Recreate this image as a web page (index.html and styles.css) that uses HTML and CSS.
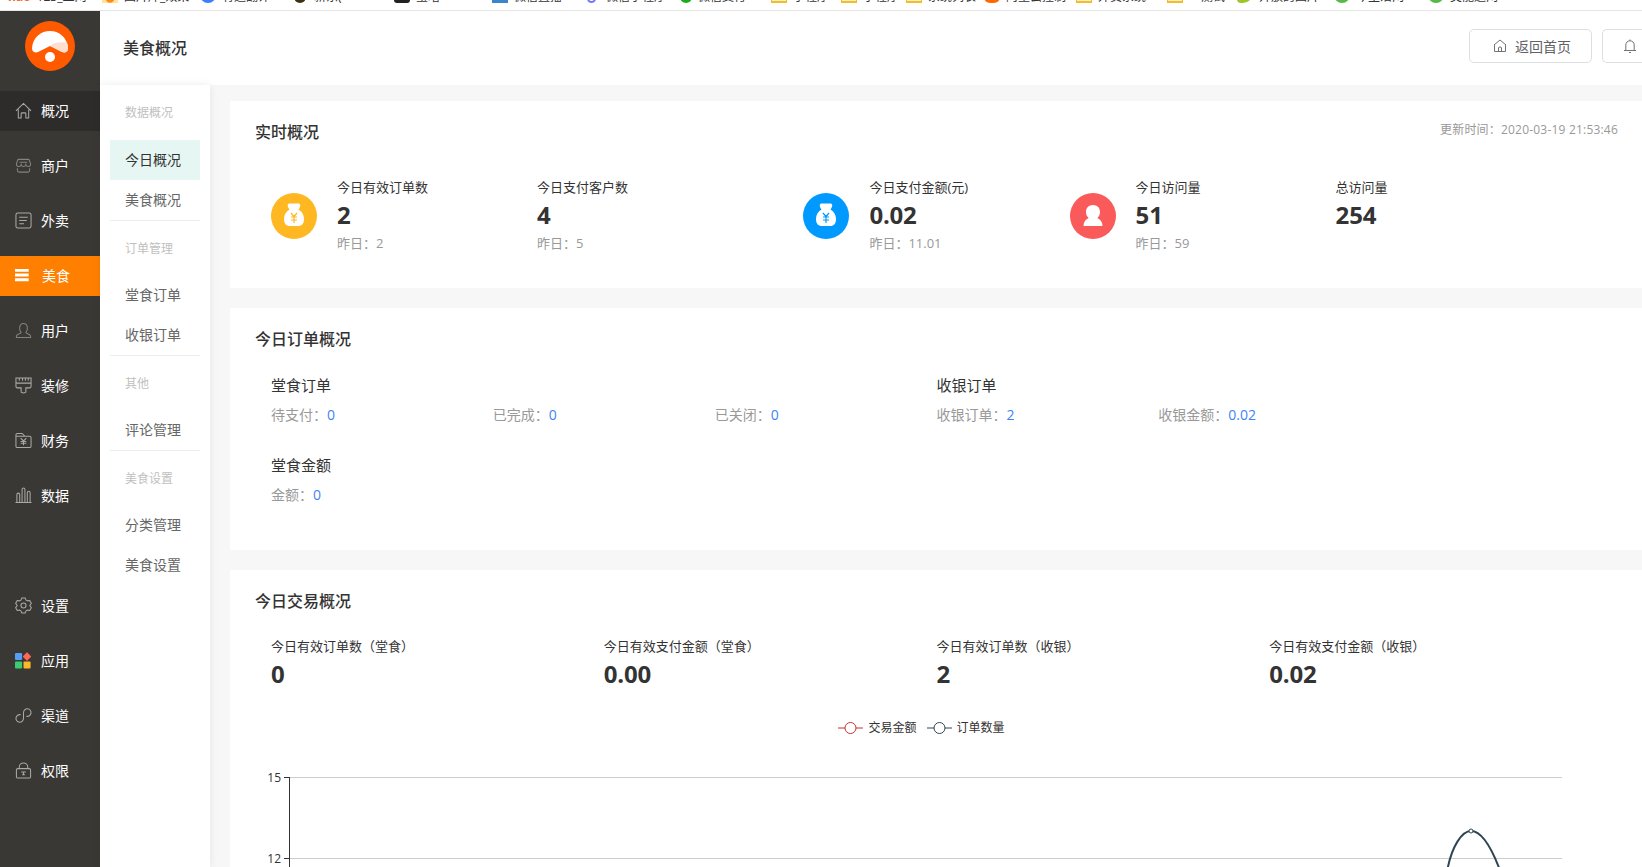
FILE: index.html
```
<!DOCTYPE html>
<html lang="zh-CN">
<head>
  <meta charset="UTF-8">
  <title>美食概况</title>
  <link rel="stylesheet" href="styles.css">
</head>
<body>

  <ul class="bookmarks">
    <li><b class="hao">hao</b><span>123_上网</span></li>
    <li><i class="mark sun"></i><span>图片库_效果</span></li>
    <li><i class="mark blue"></i><span>有道翻译</span></li>
    <li><i class="mark bag"></i><span>新东(</span></li>
    <li><i class="mark black"></i><span>宝塔</span></li>
    <li><i class="mark square"></i><span>微信直播</span></li>
    <li><i class="mark purple"></i><span>微信小程序</span></li>
    <li><i class="mark chat"></i><span>微信支付</span></li>
    <li><i class="mark folder"></i><span>小程序</span></li>
    <li><i class="mark folder"></i><span>小程序</span></li>
    <li><i class="mark folder"></i><span>系统列表</span></li>
    <li><i class="mark orange"></i><span>阿里云控制</span></li>
    <li><i class="mark folder"></i><span>外卖系统</span></li>
    <li><i class="mark folder"></i><span>　测试</span></li>
    <li><i class="mark leaf"></i><span>开放的图片</span></li>
    <li><i class="mark green"></i><span>今生活网</span></li>
    <li><i class="mark green"></i><span>美能达网</span></li>
  </ul>

  <div class="app">
    <nav class="sidebar">
      <svg class="logo" viewBox="0 0 50 50">
        <circle cx="25" cy="25" r="25" fill="#ff5a00"/>
        <path d="M7 27C8 16 16 10 25 10s17 6 18 17c.2 4-3 5.500-7 3.500L25 25l-11 5.500c-4 2-7.200.5-7-3.500z" fill="#fff"/>
        <path d="M25 25c3-3 8-4.500 17-3.500 1.500 4 1.800 9.500-2 10-4 0-9-4.500-15-6.500z" fill="#ffdfd0"/>
        <circle cx="25" cy="36" r="5" fill="#fff"/>
      </svg>

      <a class="menu-item current">
        <svg viewBox="0 0 18 18"><path d="M1 9.500L9 1.500l8 8M3.500 8v9h3v-4.500q0-1 1-1h3q1 0 1 1V17h3V8"/></svg>
        <span>概况</span>
      </a>
      <a class="menu-item dim">
        <svg viewBox="0 0 18 18"><path d="M4 2.500h10q1 0 1.300 1l1.200 4q0 2.500-2.300 2.500-2 0-2.700-2-.6 2-2.500 2T6.500 8q-.7 2-2.700 2Q1.500 10 1.500 7.500l1.200-4q.3-1 1.300-1zM2.500 12v2q0 2 2 2h9q2 0 2-2v-2M5 5.500h8"/></svg>
        <span>商户</span>
      </a>
      <a class="menu-item">
        <svg viewBox="0 0 18 18"><rect x="1" y="1" width="16" height="16" rx="2"/><path d="M4.500 5.500h9M4.500 9h8M4.500 12.500h5"/></svg>
        <span>外卖</span>
      </a>
      <a class="menu-item active">
        <svg viewBox="0 0 18 18"><path d="M0 3.500h14.500M0 8.500h14.500M0 13.500h14.500"/></svg>
        <span>美食</span>
      </a>
      <a class="menu-item dim">
        <svg viewBox="0 0 18 18"><path d="M6.500 11.200C3.800 8 4.300 1.500 9 1.500s5.200 6.500 2.500 9.700c.3 1.300 5 1.500 5 3.800v1.500h-15V15c0-2.300 4.700-2.500 5-3.800z"/></svg>
        <span>用户</span>
      </a>
      <a class="menu-item">
        <svg viewBox="0 0 18 18"><path d="M1 1h16v9q0 1.500-1.500 1.500h-4V16q-2.500 2-5 0v-4.500h-4Q1 11.500 1 10zM1 6.500h16M4.500 1v3M8 1v3M11 1v3M14 1v3"/></svg>
        <span>装修</span>
      </a>
      <a class="menu-item">
        <svg viewBox="0 0 18 18"><path d="M1 15V3q0-1.500 1.500-1.500h5l3 3M1 4.500h14.500Q17 4.500 17 6v9q0 1.500-1.500 1.500h-13Q1 16.500 1 15M6 6.500l3 3 3-3M9 9.500V14M6 10h6M6 12h6"/></svg>
        <span>财务</span>
      </a>
      <a class="menu-item">
        <svg viewBox="0 0 18 18"><path d="M.5 16.500h17M2 16.500V8q0-1.500 1.500-1.500T5 8v8.500M7.500 16.500v-14Q7.500 1 9 1t1.500 1.500v14M13 16.500V6q0-1.500 1.500-1.500T16 6v10.500"/></svg>
        <span>数据</span>
      </a>

      <a class="menu-item settings">
        <svg viewBox="0 0 18 18"><path d="M7.200 1h3.600l.9 2.300 1.300.8 2.600-.4 1.700 3L15.600 9l1.700 2.300-1.700 3-2.600-.4-1.300.8-.9 2.300H7.200l-.9-2.300-1.300-.8-2.600.4-1.700-3L2.400 9 .7 6.700l1.700-3 2.600.4 1.300-.8z" stroke-linejoin="round"/><circle cx="9" cy="9" r="2.700"/></svg>
        <span>设置</span>
      </a>
      <a class="menu-item apps">
        <svg viewBox="0 0 18 18">
          <rect x="0" y="1" width="7.500" height="7.500" rx="1" fill="#559df5"/>
          <path d="M12.700 1l3.800 3.800-3.800 3.800L8.900 4.800z" fill="#ff6757" stroke="#ff6757" stroke-linejoin="round"/>
          <rect x="0" y="10" width="7.500" height="7.500" rx="1" fill="#3bcb73"/>
          <rect x="9" y="10" width="7.500" height="7.500" rx="1" fill="#fbb924"/>
        </svg>
        <span>应用</span>
      </a>
      <a class="menu-item">
        <svg viewBox="0 0 18 18"><path d="M6 8.200a4 4 0 1 0 3 3.800V6a4 4 0 1 1 3 3.800"/></svg>
        <span>渠道</span>
      </a>
      <a class="menu-item">
        <svg viewBox="0 0 18 18"><rect x="1.500" y="7" width="15" height="10" rx="1.500"/><path d="M4.500 7V5.500a4.500 4.500 0 0 1 9 0V7M6.500 10.500h5M9 10.500v3M7.500 13.500h3"/></svg>
        <span>权限</span>
      </a>
    </nav>

    <div class="page">
      <header class="topbar">
        <h1>美食概况</h1>
        <div class="actions">
          <a class="btn">
            <svg viewBox="0 0 14 14"><path d="M1 6L7 1l6 5M1.500 5.500v7h11v-7M5.500 12.500V9q0-1 1.500-1t1.500 1v3.500"/></svg>
            <span>返回首页</span>
          </a>
          <a class="btn btn-bell">
            <svg viewBox="0 0 14 14"><path d="M1 11.500h12M2.800 11.500V6a4.200 4.200 0 0 1 8.400 0v5.500M7 .5v1.300M6 13.500h2"/></svg>
          </a>
        </div>
      </header>

      <div class="body">
        <aside class="subnav">
          <section>
            <h4>数据概况</h4>
            <a class="active">今日概况</a>
            <a>美食概况</a>
          </section>
          <section>
            <h4>订单管理</h4>
            <a>堂食订单</a>
            <a>收银订单</a>
          </section>
          <section>
            <h4>其他</h4>
            <a>评论管理</a>
          </section>
          <section>
            <h4>美食设置</h4>
            <a>分类管理</a>
            <a>美食设置</a>
          </section>
        </aside>

        <main class="content">
          <div class="card realtime">
            <div class="card-head">
              <h2>实时概况</h2>
              <span class="update">更新时间：2020-03-19 21:53:46</span>
            </div>
            <div class="realtime-row">
              <div class="block wide">
                <svg class="round yellow" viewBox="0 0 46 46">
                  <path class="shape" d="M18 10.500h10c2 1 1.500 3-.5 6 3.500 2 5.500 5.500 5.500 9.500 0 4.500-2 7-6 7h-8c-4 0-6-2.500-6-7 0-4 2-7.500 5.500-9.500-2-3-2.500-5-.5-6z"/>
                  <path class="yen" d="M20 20l3 3.500 3-3.500M23 23.500V30M20 24h6M20 27h6"/>
                </svg>
                <div class="stat"><p>今日有效订单数</p><strong>2</strong><small>昨日：2</small></div>
                <div class="stat"><p>今日支付客户数</p><strong>4</strong><small>昨日：5</small></div>
              </div>
              <div class="block">
                <svg class="round azure" viewBox="0 0 46 46">
                  <path class="shape" d="M18 10.500h10c2 1 1.500 3-.5 6 3.500 2 5.500 5.500 5.500 9.500 0 4.500-2 7-6 7h-8c-4 0-6-2.500-6-7 0-4 2-7.500 5.500-9.500-2-3-2.500-5-.5-6z"/>
                  <path class="yen" d="M20 20l3 3.500 3-3.500M23 23.500V30M20 24h6M20 27h6"/>
                </svg>
                <div class="stat"><p>今日支付金额(元)</p><strong>0.02</strong><small>昨日：11.01</small></div>
              </div>
              <div class="block wide">
                <svg class="round red" viewBox="0 0 46 46">
                  <path class="shape" d="M23 12c4.500 0 7 3 7 7 0 2.500-1 4.500-2.700 6 3 1.500 5.200 4 5.200 8h-19c0-4 2.200-6.500 5.200-8C17 23.500 16 21.500 16 19c0-4 2.500-7 7-7z"/>
                </svg>
                <div class="stat"><p>今日访问量</p><strong>51</strong><small>昨日：59</small></div>
                <div class="stat"><p>总访问量</p><strong>254</strong></div>
              </div>
            </div>
          </div>

          <div class="card orders">
            <h2>今日订单概况</h2>
            <div class="orders-grid">
              <div class="group">
                <h3>堂食订单</h3>
                <div class="cells">
                  <span>待支付：<em>0</em></span>
                  <span>已完成：<em>0</em></span>
                  <span>已关闭：<em>0</em></span>
                </div>
              </div>
              <div class="group">
                <h3>收银订单</h3>
                <div class="cells">
                  <span>收银订单：<em>2</em></span>
                  <span>收银金额：<em>0.02</em></span>
                </div>
              </div>
              <div class="group">
                <h3>堂食金额</h3>
                <div class="cells">
                  <span>金额：<em>0</em></span>
                </div>
              </div>
            </div>
          </div>

          <div class="card trade">
            <h2>今日交易概况</h2>
            <div class="trade-grid">
              <div class="stat"><p>今日有效订单数（堂食）</p><strong>0</strong></div>
              <div class="stat"><p>今日有效支付金额（堂食）</p><strong>0.00</strong></div>
              <div class="stat"><p>今日有效订单数（收银）</p><strong>2</strong></div>
              <div class="stat"><p>今日有效支付金额（收银）</p><strong>0.02</strong></div>
            </div>
            <div class="legend">
              <span>
                <svg viewBox="0 0 25 14"><path d="M0 7h25" stroke="#c23531"/><circle cx="12.500" cy="7" r="5.500" stroke="#c23531"/></svg>
                交易金额
              </span>
              <span>
                <svg viewBox="0 0 25 14"><path d="M0 7h25" stroke="#2f4554"/><circle cx="12.500" cy="7" r="5.500" stroke="#2f4554"/></svg>
                订单数量
              </span>
            </div>
            <svg class="chart" width="1334" height="110" viewBox="0 0 1334 110">
              <path class="split" d="M35 19.500H1307M35 100.500H1307"/>
              <path class="axis" d="M34.500 19V110M29 19.500h6M29 100.500h6"/>
              <text x="26" y="24">15</text>
              <text x="26" y="105">12</text>
              <path class="line" d="M1192.500 111C1197 88 1207 73 1216 73S1235 86 1244.500 111"/>
              <circle class="dot" cx="1216" cy="73" r="2"/>
            </svg>
          </div>
        </main>
      </div>
    </div>
  </div>

</body>
</html>
```
FILE: styles.css
```
* {
  box-sizing: border-box;
  margin: 0;
  padding: 0;
}

body {
  height: 867px;
  overflow: hidden;
  display: flex;
  flex-direction: column;
  font-family: "Open Sans", "Noto Sans CJK SC", sans-serif;
  font-size: 14px;
  color: #333;
  background: #fff;
}

svg {
  flex: none;
  fill: none;
}

/* bookmarks */
.bookmarks {
  flex: none;
  height: 11px;
  padding: 0 0 7px 8px;
  display: flex;
  align-items: flex-end;
  overflow: hidden;
  list-style: none;
  border-bottom: 1px solid #e5e5e5;
  font-size: 12px;
}

.bookmarks li {
  flex: none;
  width: 94px;
  height: 16px;
  display: flex;
  gap: 6px;
  line-height: 20px;
  white-space: nowrap;
}

.bookmarks li:nth-child(2),
.bookmarks li:nth-child(5) { width: 98px; }
.bookmarks li:nth-child(3) { width: 92px; }
.bookmarks li:nth-child(4) { width: 102px; }
.bookmarks li:nth-child(6),
.bookmarks li:nth-child(8),
.bookmarks li:nth-child(13) { width: 91px; }
.bookmarks li:nth-child(7),
.bookmarks li:nth-child(15) { width: 97px; }
.bookmarks li:nth-child(9),
.bookmarks li:nth-child(14) { width: 70px; }
.bookmarks li:nth-child(10) { width: 65px; }
.bookmarks li:nth-child(11) { width: 78px; }
.bookmarks li:nth-child(12) { width: 92px; }

.hao {
  color: #f06a1f;
}

.mark {
  width: 16px;
  height: 16px;
}

.sun { background: radial-gradient(circle at 50% 70%, #ff8a1c 4px, #ffe49a 5px); }
.blue { background: #3d7eff; border-radius: 0 0 8px 8px; }
.bag { width: 12px; margin: 0 2px; background: #222; border-radius: 6px; border-bottom: 3px solid #3a3216; }
.black { background: #222; border-radius: 3px; }
.square { background: #3b86c8; }
.purple { width: 9px; margin: 0 4px; border: 2px solid #7378f0; border-radius: 5px; }
.chat { width: 12px; background: #1aad19; border-radius: 6px; }
.folder { background: #fdeebb; border: 2px solid #f0bd2f; border-width: 1px 1px 2px; }
.orange { background: #ff6a00; border-radius: 6px; }
.leaf { background: #9bc52a; border-radius: 2px 2px 10px 4px; }
.green { background: #57b947; border-radius: 8px; }

.app {
  flex: 1;
  min-height: 0;
  display: flex;
}

/* left menu */
.sidebar {
  flex: none;
  width: 100px;
  display: flex;
  flex-direction: column;
  gap: 15px;
  padding-top: 10px;
  background: #3a3835;
}

.logo {
  width: 50px;
  height: 50px;
  margin: 0 auto 5px;
}

.menu-item {
  flex: none;
  height: 40px;
  display: flex;
  align-items: center;
  gap: 9px;
  padding: 0 0 2px 15px;
  color: #fff;
}

.menu-item svg {
  width: 17px;
  height: 17px;
  stroke: #aaa9a7;
  stroke-width: 1.1;
}

.menu-item.dim svg {
  stroke: #858381;
}

.menu-item.current {
  background: #2e2c2a;
}

.menu-item.active {
  background: #ff8000;
  gap: 10px;
}

.menu-item.active svg {
  stroke: #fff;
  stroke-width: 3;
}

.menu-item.apps svg {
  stroke: none;
}

.settings {
  margin-top: 55px;
}

.page {
  flex: 1;
  min-width: 0;
  display: flex;
  flex-direction: column;
}

.topbar {
  flex: none;
  height: 74px;
  display: flex;
  justify-content: space-between;
  padding-left: 23px;
}

.topbar h1 {
  font-size: 16px;
  font-weight: 500;
  line-height: 75px;
}

.actions {
  display: flex;
  gap: 10px;
  padding-top: 18px;
  width: 173px;
}

.btn {
  flex: none;
  height: 34px;
  width: 123px;
  padding-left: 23px;
  display: flex;
  align-items: center;
  gap: 8px;
  border: 1px solid #dcdfe0;
  border-radius: 5px;
  color: #606266;
}

/* runs to the window edge */
.btn-bell {
  width: 40px;
  padding-left: 20px;
  border-right: 0;
  border-radius: 5px 0 0 5px;
}

.btn svg {
  width: 14px;
  height: 14px;
  stroke: #707276;
}

.body {
  flex: 1;
  min-height: 0;
  display: flex;
  background: #f7f7f7;
}

/* second level menu */
.subnav {
  flex: none;
  width: 110px;
  padding: 0 10px;
  background: #fff;
  box-shadow: 0 0 8px rgba(0, 0, 0, 0.08);
}

.subnav h4 {
  height: 55px;
  padding-left: 15px;
  line-height: 56px;
  font-size: 12px;
  font-weight: 400;
  color: #bfbfbf;
}

.subnav section + section h4 {
  border-top: 1px solid #ededed;
}

.subnav a {
  display: block;
  height: 40px;
  padding-left: 15px;
  line-height: 40px;
  color: #666;
}

.subnav a.active {
  background: #e6f6f2;
  color: #333;
}

/* cards */
.content {
  flex: 1;
  min-width: 0;
  padding: 16px 0 0 20px;
  overflow: hidden;
}

.card {
  margin-bottom: 20px;
  padding: 19px 24px 0 25px;
  background: #fff;
}

.card h2 {
  font-size: 16px;
  font-weight: 500;
  line-height: 24px;
}

.card-head {
  display: flex;
  justify-content: space-between;
}

.update {
  font-size: 12px;
  line-height: 20px;
  letter-spacing: 0.2px;
  color: #999;
}

.realtime {
  height: 187px;
}

.realtime-row {
  width: 1331px;
  display: flex;
  margin: 31px 0 0 16px;
}

.block {
  flex: 1;
  display: flex;
}

.block.wide {
  flex: 2;
}

.block .stat {
  width: 200px;
}

.round {
  width: 46px;
  height: 46px;
  margin: 18px 20px 0 0;
  border-radius: 50%;
}

.round .shape {
  fill: #fff;
}

.round .yen {
  stroke-width: 1.2;
}

.yellow { background: #ffb822; }
.yellow .yen { stroke: #ffb822; }
.azure { background: #0099ff; }
.azure .yen { stroke: #0099ff; }
.red { background: #fa5a5a; }

.stat p {
  font-size: 13px;
  line-height: 24px;
  white-space: nowrap;
}

.stat strong {
  display: block;
  font-size: 24px;
  line-height: 32px;
  letter-spacing: -0.2px;
}

.stat small {
  display: block;
  font-size: 13px;
  line-height: 24px;
  color: #999;
}

.orders {
  height: 242px;
}

.orders-grid {
  width: 1331px;
  display: grid;
  grid-template-columns: 1fr 1fr;
  row-gap: 26px;
  margin: 22px 0 0 16px;
}

.orders h3 {
  font-size: 15px;
  font-weight: 400;
  line-height: 24px;
}

.cells {
  display: grid;
  grid-template-columns: repeat(3, 1fr);
  margin-top: 6px;
  line-height: 24px;
  color: #999;
}

.cells em {
  font-style: normal;
  color: #3f83f8;
}

.trade {
  height: 297px;
  margin-bottom: 0;
}

.trade-grid {
  width: 1331px;
  display: grid;
  grid-template-columns: repeat(4, 1fr);
  margin: 21px 0 0 16px;
}

.legend {
  width: 1333px;
  height: 20px;
  margin: 28px 0 20px;
  display: flex;
  justify-content: center;
  gap: 10px;
  font-size: 12px;
  line-height: 20px;
}

.legend span {
  display: flex;
  align-items: center;
  gap: 5px;
}

.legend svg {
  width: 25px;
  height: 14px;
}

.legend circle {
  fill: #fff;
}

.chart {
  display: block;
}

.chart text {
  font-size: 12px;
  text-anchor: end;
  fill: #333;
}

.split { stroke: #ccc; }
.axis { stroke: #333; }
.line { stroke: #2f4554; stroke-width: 2; }
.dot { fill: #fff; stroke: #2f4554; }
```
